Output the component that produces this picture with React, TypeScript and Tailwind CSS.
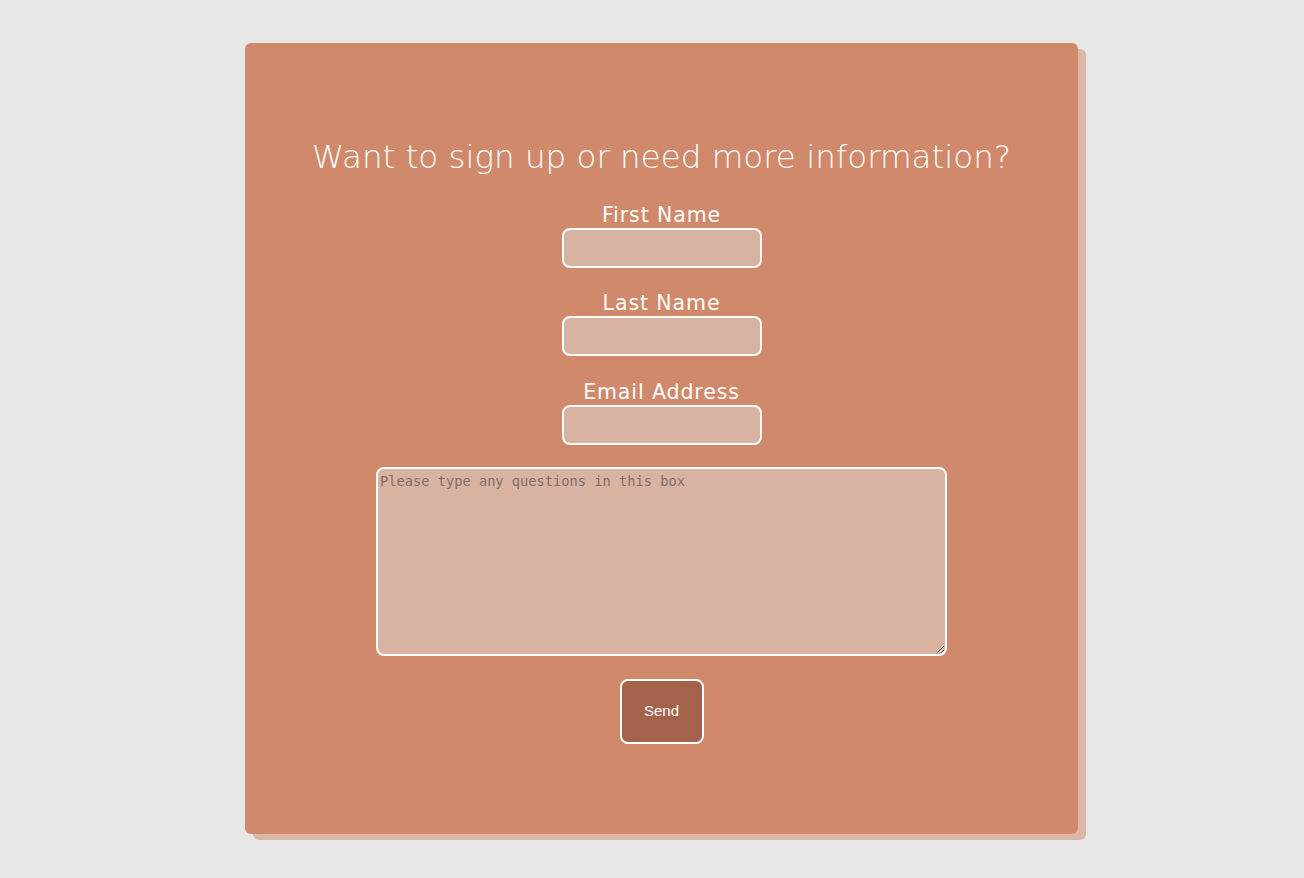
import React from "react";

export default function App() {
  return (
    <div className="min-h-[878px] w-full bg-[#e7e7e7] pt-[43px]">
      <div className="ml-[245px] w-[833px] h-[791px] rounded-[6px] bg-[#d0896b] shadow-[8px_6px_0_0_#dcb7a7] flex flex-col items-center">
        <h1 className="mt-[94px] text-[32.5px] leading-[40px] font-extralight text-white font-['DejaVu_Sans',sans-serif]">
          Want to sign up or need more information?
        </h1>
        <label className="mt-[26px] text-[20.5px] leading-[24px] font-normal tracking-[0.9px] text-white font-['DejaVu_Sans',sans-serif]">First Name</label>
        <input className="mt-[1px] w-[200px] h-[40px] rounded-[8px] border-2 border-white bg-[#d9b3a2] outline-none" />
        <label className="mt-[23px] text-[20.5px] leading-[24px] font-normal tracking-[0.9px] text-white font-['DejaVu_Sans',sans-serif]">Last Name</label>
        <input className="mt-[1px] w-[200px] h-[40px] rounded-[8px] border-2 border-white bg-[#d9b3a2] outline-none" />
        <label className="mt-[24px] text-[20.5px] leading-[24px] font-normal tracking-[0.9px] text-white font-['DejaVu_Sans',sans-serif]">Email Address</label>
        <input className="mt-[1px] w-[200px] h-[40px] rounded-[8px] border-2 border-white bg-[#d9b3a2] outline-none" />
        <textarea
          placeholder="Please type any questions in this box"
          className="mt-[22px] w-[571px] h-[189px] rounded-[8px] border-2 border-white bg-[#d9b3a2] px-[2px] pt-[4px] text-[13.7px] leading-[17px] font-['DejaVu_Sans_Mono',monospace] placeholder:text-[#7d6e67] outline-none"
        />
        <button className="mt-[23px] w-[84px] h-[65px] rounded-[8px] border-2 border-white bg-[#a5624a] text-white text-[15px] font-['Liberation_Sans',Arial,sans-serif]">
          Send
        </button>
      </div>
    </div>
  );
}
